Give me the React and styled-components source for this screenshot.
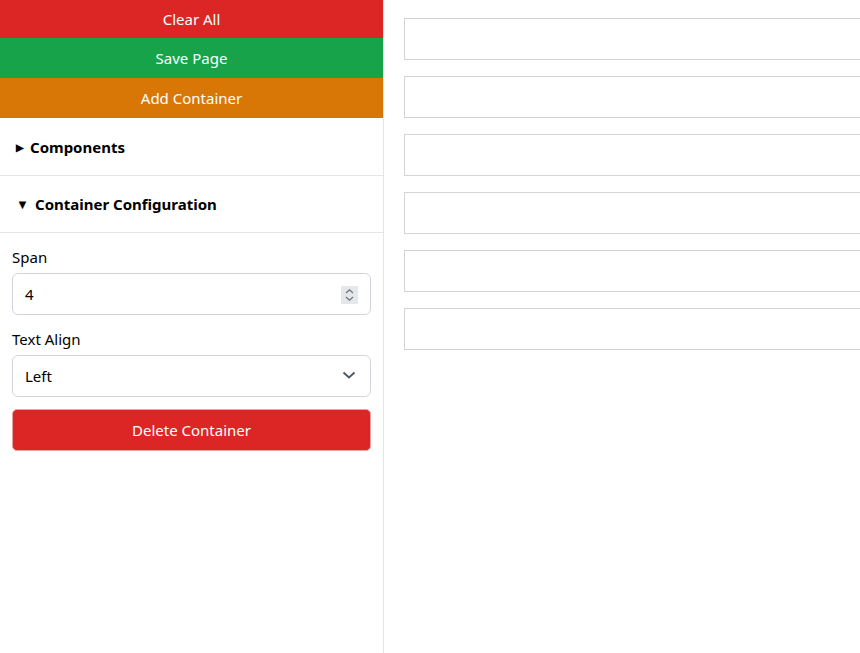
import React from "react";
import styled, { createGlobalStyle } from "styled-components";

const Global = createGlobalStyle`
  html, body { margin: 0; padding: 0; background: #fff; overflow: hidden; }
  body { font-family: "Noto Sans", "Open Sans", sans-serif; color: #000; }
  * { box-sizing: border-box; }
`;

const Page = styled.div`
  display: flex;
  width: 860px;
  height: 653px;
  overflow: hidden;
`;

const Sidebar = styled.aside`
  width: 384px;
  flex: none;
  border-right: 1px solid #e5e5e5;
  display: flex;
  flex-direction: column;
`;

const ActionButton = styled.button`
  display: block;
  width: 100%;
  height: ${(p) => p.$h || 40}px;
  border: none;
  margin: 0;
  padding: 0;
  background: ${(p) => p.$bg};
  color: #fff;
  font-family: inherit;
  font-size: 15px;
  line-height: 1;
`;

const Section = styled.div`
  border-bottom: 1px solid #e5e5e5;
`;

const Summary = styled.div`
  height: ${(p) => p.$h}px;
  display: flex;
  align-items: center;
  padding-left: 16px;
  font-weight: 700;
  font-size: 15px;
`;

const Marker = styled.span`
  display: inline-block;
  font-size: ${(p) => p.$size}px;
  width: ${(p) => p.$w}px;
`;

const Body = styled.div`
  padding: 14px 12px;
  display: flex;
  flex-direction: column;
`;

const Label = styled.label`
  font-size: 15px;
  line-height: 20px;
  margin-bottom: 6px;
`;

const Field = styled.div`
  position: relative;
  height: 42px;
  border: 1px solid #d1d5db;
  border-radius: 6px;
  display: flex;
  align-items: center;
  padding-left: 12px;
  font-size: 15px;
  margin-bottom: ${(p) => p.$mb}px;
`;

const Spinner = styled.span`
  position: absolute;
  right: 12px;
  top: 12px;
  width: 17px;
  height: 18px;
  background: #e5e7eb;
  display: flex;
  align-items: center;
  justify-content: center;
`;

const Chevron = styled.span`
  position: absolute;
  right: 14px;
  top: 14px;
  display: flex;
`;

const DeleteButton = styled.button`
  height: 42px;
  width: 100%;
  border: 1px solid #e5a3a3;
  border-radius: 5px;
  background: #dc2626;
  color: #fff;
  font-family: inherit;
  font-size: 15px;
`;

const Canvas = styled.main`
  flex: 1;
  padding: 18px 0 0 20px;
  display: flex;
  flex-direction: column;
  gap: 16px;
  overflow: hidden;
`;

const Box = styled.div`
  width: 600px;
  height: 42px;
  border: 1px solid #d4d4d8;
  flex: none;
`;

export default function App() {
  return (
    <Page>
      <Global />
      <Sidebar>
        <ActionButton $bg="#dc2626" $h={38}>Clear All</ActionButton>
        <ActionButton $bg="#16a34a">Save Page</ActionButton>
        <ActionButton $bg="#d97706">Add Container</ActionButton>
        <Section>
          <Summary $h={57}>
            <Marker $size={10} $w={14}>▶</Marker>Components
          </Summary>
        </Section>
        <Section>
          <Summary $h={56}>
            <Marker $size={13} $w={19}>▼</Marker>Container Configuration
          </Summary>
        </Section>
        <Body>
          <Label>Span</Label>
          <Field $mb={14}>
            4
            <Spinner>
              <svg width="9" height="14" viewBox="0 0 9 14" fill="none" stroke="#6b7280" strokeWidth="1.2">
                <path d="M1 5 L4.5 1.8 L8 5" />
                <path d="M1 9 L4.5 12.2 L8 9" />
              </svg>
            </Spinner>
          </Field>
          <Label>Text Align</Label>
          <Field $mb={12}>
            Left
            <Chevron>
              <svg width="14" height="10" viewBox="0 0 14 10" fill="none" stroke="#4b5563" strokeWidth="1.8">
                <path d="M1.5 2.5 L7 7.5 L12.5 2.5" />
              </svg>
            </Chevron>
          </Field>
          <DeleteButton>Delete Container</DeleteButton>
        </Body>
      </Sidebar>
      <Canvas>
        {[0, 1, 2, 3, 4, 5].map((i) => (
          <Box key={i} />
        ))}
      </Canvas>
    </Page>
  );
}
